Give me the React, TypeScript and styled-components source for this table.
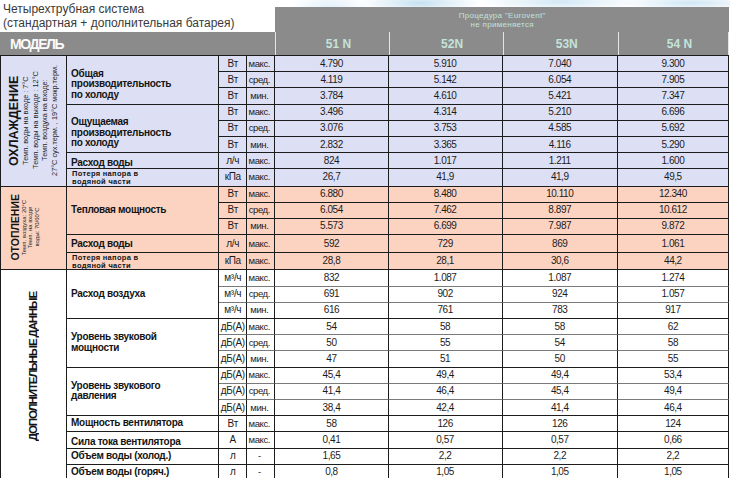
import React from 'react';
import styled, { createGlobalStyle } from 'styled-components';

type Tone = 'cool' | 'heat' | 'plain';
type Place = 'top' | 'middle' | 'bottom';

interface DataRow {
  unit: string;
  mode: string;
  values: string[];
}

interface Group {
  lines: string[];
  small?: boolean;
  place?: Place;
  lift?: number;
  rows: DataRow[];
}

interface Section {
  key: string;
  tone: Tone;
  lean?: boolean;
  title: string;
  titleSize: number;
  titleTrack: number;
  notes: string[];
  noteSize: number;
  noteLine: number;
  groups: Group[];
}

const tones: Record<Tone, string> = {
  cool: '#dde0f4',
  heat: '#fcd3c1',
  plain: '#ffffff',
};

const ink = '#1c1c1c';
const headGray = '#8b8b8b';

const GlobalStyle = createGlobalStyle`
  html, body {
    margin: 0;
    padding: 0;
    background: #fff;
  }
  body {
    font-family: "Liberation Sans", Arial, sans-serif;
    color: ${ink};
  }
`;

const Page = styled.div`
  width: 730px;
  height: 478px;
  overflow: hidden;
  background:
    radial-gradient(ellipse 60px 10px at 420px 3px, rgba(150, 200, 230, 0.55), transparent 100%),
    radial-gradient(ellipse 80px 9px at 560px 2px, rgba(165, 210, 235, 0.5), transparent 100%),
    radial-gradient(ellipse 70px 8px at 690px 3px, rgba(150, 200, 230, 0.45), transparent 100%),
    radial-gradient(ellipse 40px 20px at 330px 10px, rgba(175, 215, 238, 0.4), transparent 100%),
    #fff;
`;

const Sheet = styled.table`
  width: 729px;
  table-layout: fixed;
  border-collapse: separate;
  border-spacing: 0;
`;

const Col = styled.col<{ $w: number }>`
  width: ${(p) => p.$w}px;
`;

const TitleCell = styled.td`
  height: 30px;
  padding: 2px 0 0 3px;
  vertical-align: top;
  font-size: 12px;
  line-height: 14px;
  color: #3a3a3a;
  white-space: nowrap;
`;

const NoteCell = styled.td`
  padding: 0;
  vertical-align: bottom;
`;

const NoteBox = styled.div`
  height: 25px;
  box-sizing: border-box;
  padding-top: 5px;
  background: ${headGray};
  color: #c3e2da;
  font-size: 8px;
  line-height: 8.5px;
  letter-spacing: 0.3px;
  text-align: center;
`;

const ModelHead = styled.th`
  height: 23px;
  padding: 0 0 0 10px;
  background: ${headGray};
  color: #fafafa;
  text-align: left;
  vertical-align: middle;
  font-size: 14px;
  font-weight: 700;
  letter-spacing: -1.4px;
`;

const ModelNo = styled.th`
  padding: 0 0 0 12px;
  background: ${headGray};
  color: #c4e3da;
  border-left: 1px solid #e4e4e4;
  text-align: center;
  vertical-align: middle;
  font-size: 12px;
  font-weight: 700;

  &:last-child {
    border-right: 1px solid #e4e4e4;
  }
`;

const Cell = styled.td<{ $tone: Tone; $top?: boolean; $soft?: boolean }>`
  height: 15.2px;
  padding: 0;
  background: ${(p) => tones[p.$tone]};
  border-right: 1px solid ${ink};
  border-bottom: 1px solid ${(p) => (p.$soft ? '#7a7a7a' : ink)};
  border-top: ${(p) => (p.$top ? `1px solid ${ink}` : 'none')};
  line-height: 12px;
  vertical-align: middle;
  white-space: nowrap;
`;

const SectionCell = styled(Cell)<{ $lean?: boolean; $drop?: number }>`
  border-left: 1px solid ${ink};
  border-bottom-color: ${ink};
  text-align: ${(p) => (p.$lean ? 'left' : 'center')};
  padding-left: ${(p) => (p.$lean ? '8px' : '0')};
  padding-bottom: ${(p) => p.$drop ?? 0}px;
`;

const SideLabel = styled.div`
  display: inline-block;
  writing-mode: vertical-rl;
  transform: rotate(180deg);
  text-align: center;
`;

const SideTitle = styled.span<{ $size: number; $track: number }>`
  display: block;
  font-size: ${(p) => p.$size}px;
  line-height: ${(p) => p.$size + 1.5}px;
  letter-spacing: ${(p) => p.$track}px;
  font-weight: 700;
  color: #141414;
`;

const SideNote = styled.span<{ $size: number; $line: number }>`
  display: block;
  font-size: ${(p) => p.$size}px;
  line-height: ${(p) => p.$line}px;
  color: #262626;
`;

const ParamCell = styled(Cell)<{ $small?: boolean; $place?: Place; $lift?: number }>`
  border-bottom-color: ${ink};
  padding: ${(p) => (p.$small ? '1px 0 0 5px' : `${p.$lift ?? 0}px 0 0 4px`)};
  vertical-align: ${(p) => p.$place ?? 'middle'};
  font-weight: 700;
  font-size: ${(p) => (p.$small ? '7.5px' : '10px')};
  line-height: ${(p) => (p.$small ? '7.6px' : '10.5px')};
  letter-spacing: ${(p) => (p.$small ? '0.3px' : '-0.3px')};
  color: #141414;
`;

const UnitCell = styled(Cell)`
  text-align: center;
  font-size: 10px;
  letter-spacing: -0.3px;
`;

const ModeCell = styled(Cell)`
  text-align: center;
  padding-right: 3px;
  font-size: 9.5px;
  letter-spacing: -0.4px;
`;

const ValueCell = styled(Cell)`
  text-align: center;
  font-size: 10px;
  letter-spacing: -0.45px;
`;

const widths = [67, 152, 28, 28, 113, 114, 115, 111];
const models = ['51 N', '52N', '53N', '54 N'];

const triple = (unit: string, rows: string[][]): DataRow[] =>
  ['макс.', 'сред.', 'мин.'].map((mode, i) => ({ unit, mode, values: rows[i] }));

const sections: Section[] = [
  {
    key: 'cool',
    tone: 'cool',
    title: 'ОХЛАЖДЕНИЕ',
    titleSize: 12.5,
    titleTrack: 0,
    notes: [
      'Темп. воды на входе : 7°C',
      'Темп. воды на выходе : 12°C',
      'Темп. воздуха на входе:',
      '27°C сух.терм. , 19°C мокр.терм.',
    ],
    noteSize: 7.3,
    noteLine: 9.6,
    groups: [
      {
        lines: ['Общая', 'производительность', 'по холоду'],
        lift: 9,
        rows: triple('Вт', [
          ['4.790', '5.910', '7.040', '9.300'],
          ['4.119', '5.142', '6.054', '7.905'],
          ['3.784', '4.610', '5.421', '7.347'],
        ]),
      },
      {
        lines: ['Ощущаемая', 'производительность', 'по холоду'],
        lift: 9,
        rows: triple('Вт', [
          ['3.496', '4.314', '5.210', '6.696'],
          ['3.076', '3.753', '4.585', '5.692'],
          ['2.832', '3.365', '4.116', '5.290'],
        ]),
      },
      {
        lines: ['Расход воды'],
        place: 'bottom',
        rows: [{ unit: 'л/ч', mode: 'макс.', values: ['824', '1.017', '1.211', '1.600'] }],
      },
      {
        lines: ['Потеря напора в', 'водяной  части'],
        small: true,
        place: 'top',
        rows: [{ unit: 'кПа', mode: 'макс.', values: ['26,7', '41,9', '41,9', '49,5'] }],
      },
    ],
  },
  {
    key: 'heat',
    tone: 'heat',
    lean: true,
    title: 'ОТОПЛЕНИЕ',
    titleSize: 10.5,
    titleTrack: 0,
    notes: ['Темп. воздуха: 20°C', 'Темп. на входе', 'воды: 70/60°C'],
    noteSize: 6,
    noteLine: 6.4,
    groups: [
      {
        lines: ['Тепловая мощность'],
        rows: triple('Вт', [
          ['6.880', '8.480', '10.110', '12.340'],
          ['6.054', '7.462', '8.897', '10.612'],
          ['5.573', '6.699', '7.987', '9.872'],
        ]),
      },
      {
        lines: ['Расход воды'],
        lift: 2,
        rows: [{ unit: 'л/ч', mode: 'макс.', values: ['592', '729', '869', '1.061'] }],
      },
      {
        lines: ['Потеря напора в', 'водяной  части'],
        small: true,
        place: 'top',
        rows: [{ unit: 'кПа', mode: 'макс.', values: ['28,8', '28,1', '30,6', '44,2'] }],
      },
    ],
  },
  {
    key: 'extra',
    tone: 'plain',
    title: 'ДОПОЛНИТЕЛЬНЫЕ ДАННЫЕ',
    titleSize: 11.5,
    titleTrack: -1.1,
    notes: [],
    noteSize: 7,
    noteLine: 9,
    groups: [
      {
        lines: ['Расход воздуха'],
        rows: triple('м³/ч', [
          ['832', '1.087', '1.087', '1.274'],
          ['691', '902', '924', '1.057'],
          ['616', '761', '783', '917'],
        ]),
      },
      {
        lines: ['Уровень звуковой', 'мощности'],
        rows: triple('дБ(А)', [
          ['54', '58', '58', '62'],
          ['50', '55', '54', '58'],
          ['47', '51', '50', '55'],
        ]),
      },
      {
        lines: ['Уровень звукового', 'давления'],
        rows: triple('дБ(А)', [
          ['45,4', '49,4', '49,4', '53,4'],
          ['41,4', '46,4', '45,4', '49,4'],
          ['38,4', '42,4', '41,4', '46,4'],
        ]),
      },
      {
        lines: ['Мощность вентилятора'],
        rows: [{ unit: 'Вт', mode: 'макс.', values: ['58', '126', '126', '124'] }],
      },
      {
        lines: ['Сила тока вентилятора'],
        place: 'bottom',
        rows: [{ unit: 'А', mode: 'макс.', values: ['0,41', '0,57', '0,57', '0,66'] }],
      },
      {
        lines: ['Объем воды (холод.)'],
        rows: [{ unit: 'л', mode: '-', values: ['1,65', '2,2', '2,2', '2,2'] }],
      },
      {
        lines: ['Объем воды (горяч.)'],
        rows: [{ unit: 'л', mode: '-', values: ['0,8', '1,05', '1,05', '1,05'] }],
      },
    ],
  },
];

const Lines: React.FC<{ lines: string[] }> = ({ lines }) => (
  <>
    {lines.map((line, i) => (
      <React.Fragment key={i}>
        {i > 0 && <br />}
        {line}
      </React.Fragment>
    ))}
  </>
);

const SectionRows: React.FC<{ section: Section; first: boolean }> = ({ section, first }) => {
  const total = section.groups.reduce((n, g) => n + g.rows.length, 0);
  const out: React.ReactNode[] = [];
  let idx = 0;

  section.groups.forEach((group, gi) => {
    group.rows.forEach((row, ri) => {
      const top = first && idx === 0;
      const soft = section.tone === 'plain' && ri < group.rows.length - 1;
      out.push(
        <tr key={`${section.key}-${gi}-${ri}`}>
          {idx === 0 && (
            <SectionCell
              rowSpan={total}
              $tone={section.tone}
              $top={top}
              $lean={section.lean}
              $drop={section.tone === 'plain' ? 16 : 0}
            >
              <SideLabel>
                <SideTitle $size={section.titleSize} $track={section.titleTrack}>
                  {section.title}
                </SideTitle>
                {section.notes.map((note) => (
                  <SideNote key={note} $size={section.noteSize} $line={section.noteLine}>
                    {note}
                  </SideNote>
                ))}
              </SideLabel>
            </SectionCell>
          )}
          {ri === 0 && (
            <ParamCell
              rowSpan={group.rows.length}
              $tone={section.tone}
              $top={top}
              $small={group.small}
              $place={group.place}
              $lift={group.lift}
            >
              <Lines lines={group.lines} />
            </ParamCell>
          )}
          <UnitCell $tone={section.tone} $top={top} $soft={soft}>
            {row.unit}
          </UnitCell>
          <ModeCell $tone={section.tone} $top={top} $soft={soft}>
            {row.mode}
          </ModeCell>
          {row.values.map((v, vi) => (
            <ValueCell key={vi} $tone={section.tone} $top={top} $soft={soft}>
              {v}
            </ValueCell>
          ))}
        </tr>
      );
      idx += 1;
    });
  });

  return <>{out}</>;
};

const App: React.FC = () => {
  return (
    <Page>
      <GlobalStyle />
      <Sheet>
        <colgroup>
          {widths.map((w, i) => (
            <Col key={i} $w={w} />
          ))}
        </colgroup>
        <thead>
          <tr>
            <TitleCell colSpan={4}>
              Четырехтрубная система
              <br />
              (стандартная + дополнительная батарея)
            </TitleCell>
            <NoteCell colSpan={4}>
              <NoteBox>
                Процедура "Eurovent"
                <br />
                не применяется
              </NoteBox>
            </NoteCell>
          </tr>
          <tr>
            <ModelHead colSpan={4}>МОДЕЛЬ</ModelHead>
            {models.map((m) => (
              <ModelNo key={m}>{m}</ModelNo>
            ))}
          </tr>
        </thead>
        <tbody>
          {sections.map((s, i) => (
            <SectionRows key={s.key} section={s} first={i === 0} />
          ))}
        </tbody>
      </Sheet>
    </Page>
  );
};

export default App;
